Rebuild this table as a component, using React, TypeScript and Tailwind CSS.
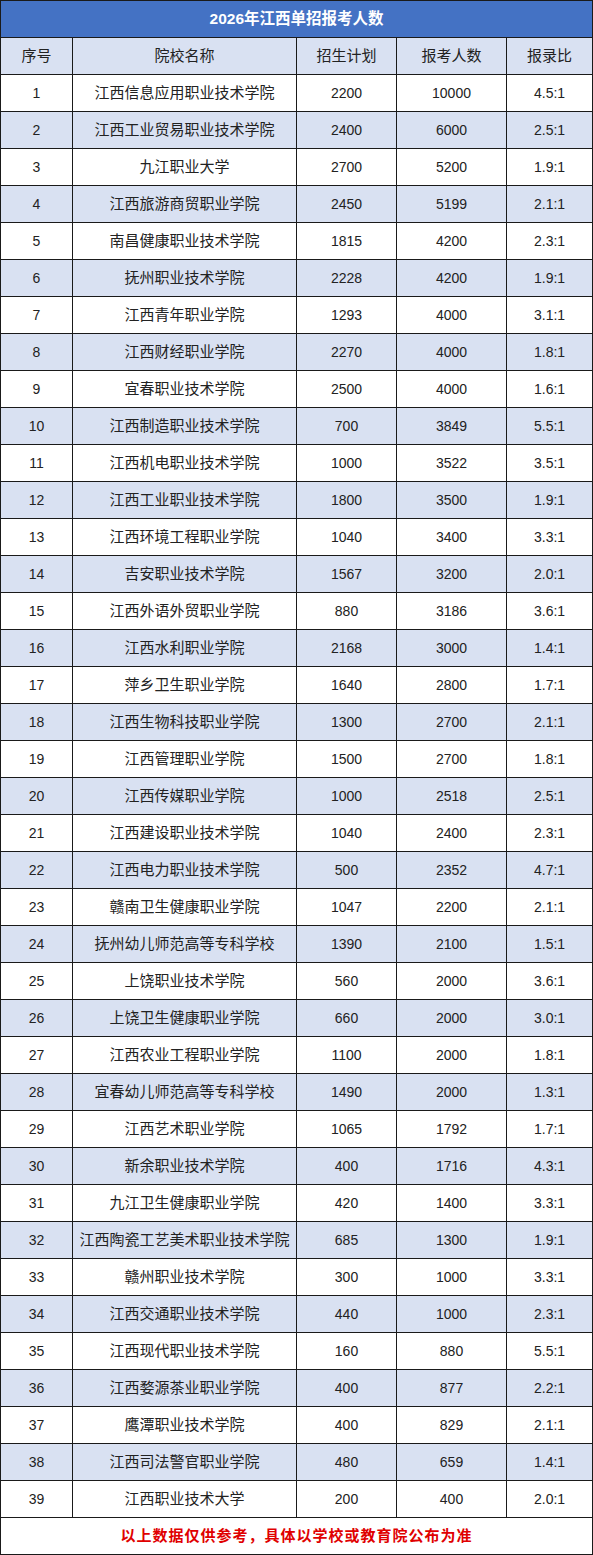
const rows: [string, string, string, string][] = [
  ["江西信息应用职业技术学院", "2200", "10000", "4.5:1"],
  ["江西工业贸易职业技术学院", "2400", "6000", "2.5:1"],
  ["九江职业大学", "2700", "5200", "1.9:1"],
  ["江西旅游商贸职业学院", "2450", "5199", "2.1:1"],
  ["南昌健康职业技术学院", "1815", "4200", "2.3:1"],
  ["抚州职业技术学院", "2228", "4200", "1.9:1"],
  ["江西青年职业学院", "1293", "4000", "3.1:1"],
  ["江西财经职业学院", "2270", "4000", "1.8:1"],
  ["宜春职业技术学院", "2500", "4000", "1.6:1"],
  ["江西制造职业技术学院", "700", "3849", "5.5:1"],
  ["江西机电职业技术学院", "1000", "3522", "3.5:1"],
  ["江西工业职业技术学院", "1800", "3500", "1.9:1"],
  ["江西环境工程职业学院", "1040", "3400", "3.3:1"],
  ["吉安职业技术学院", "1567", "3200", "2.0:1"],
  ["江西外语外贸职业学院", "880", "3186", "3.6:1"],
  ["江西水利职业学院", "2168", "3000", "1.4:1"],
  ["萍乡卫生职业学院", "1640", "2800", "1.7:1"],
  ["江西生物科技职业学院", "1300", "2700", "2.1:1"],
  ["江西管理职业学院", "1500", "2700", "1.8:1"],
  ["江西传媒职业学院", "1000", "2518", "2.5:1"],
  ["江西建设职业技术学院", "1040", "2400", "2.3:1"],
  ["江西电力职业技术学院", "500", "2352", "4.7:1"],
  ["赣南卫生健康职业学院", "1047", "2200", "2.1:1"],
  ["抚州幼儿师范高等专科学校", "1390", "2100", "1.5:1"],
  ["上饶职业技术学院", "560", "2000", "3.6:1"],
  ["上饶卫生健康职业学院", "660", "2000", "3.0:1"],
  ["江西农业工程职业学院", "1100", "2000", "1.8:1"],
  ["宜春幼儿师范高等专科学校", "1490", "2000", "1.3:1"],
  ["江西艺术职业学院", "1065", "1792", "1.7:1"],
  ["新余职业技术学院", "400", "1716", "4.3:1"],
  ["九江卫生健康职业学院", "420", "1400", "3.3:1"],
  ["江西陶瓷工艺美术职业技术学院", "685", "1300", "1.9:1"],
  ["赣州职业技术学院", "300", "1000", "3.3:1"],
  ["江西交通职业技术学院", "440", "1000", "2.3:1"],
  ["江西现代职业技术学院", "160", "880", "5.5:1"],
  ["江西婺源茶业职业学院", "400", "877", "2.2:1"],
  ["鹰潭职业技术学院", "400", "829", "2.1:1"],
  ["江西司法警官职业学院", "480", "659", "1.4:1"],
  ["江西职业技术大学", "200", "400", "2.0:1"],
];

const cell = "border border-[#1a1a1a] h-[37px] p-0 text-center align-middle";
const num = cell + " text-[14px]";

export default function App() {
  return (
    <div className="w-[593px] bg-white font-['Liberation_Sans','Noto_Sans_CJK_SC',sans-serif] text-[15px] text-[#222]">
      <table className="w-[592px] border-collapse table-fixed">
        <colgroup>
          <col className="w-[72px]" />
          <col className="w-[224px]" />
          <col className="w-[100px]" />
          <col className="w-[110px]" />
          <col className="w-[86px]" />
        </colgroup>
        <thead>
          <tr>
            <th
              colSpan={5}
              className="border border-[#1a1a1a] h-[37px] bg-[#4472c4] text-white text-[15.5px] font-bold"
            >
              2026年江西单招报考人数
            </th>
          </tr>
          <tr className="bg-[#d9e1f2]">
            {["序号", "院校名称", "招生计划", "报考人数", "报录比"].map((h) => (
              <th key={h} className={cell + " font-normal"}>
                {h}
              </th>
            ))}
          </tr>
        </thead>
        <tbody>
          {rows.map((r, i) => (
            <tr key={i} className={i % 2 === 1 ? "bg-[#d9e1f2]" : "bg-white"}>
              <td className={num}>{i + 1}</td>
              <td className={cell}>{r[0]}</td>
              <td className={num}>{r[1]}</td>
              <td className={num}>{r[2]}</td>
              <td className={num}>{r[3]}</td>
            </tr>
          ))}
          <tr>
            <td
              colSpan={5}
              className="border border-[#1a1a1a] h-[37px] text-center font-bold text-[#e00000] text-[15px] tracking-[1px]"
            >
              以上数据仅供参考，具体以学校或教育院公布为准
            </td>
          </tr>
        </tbody>
      </table>
    </div>
  );
}
